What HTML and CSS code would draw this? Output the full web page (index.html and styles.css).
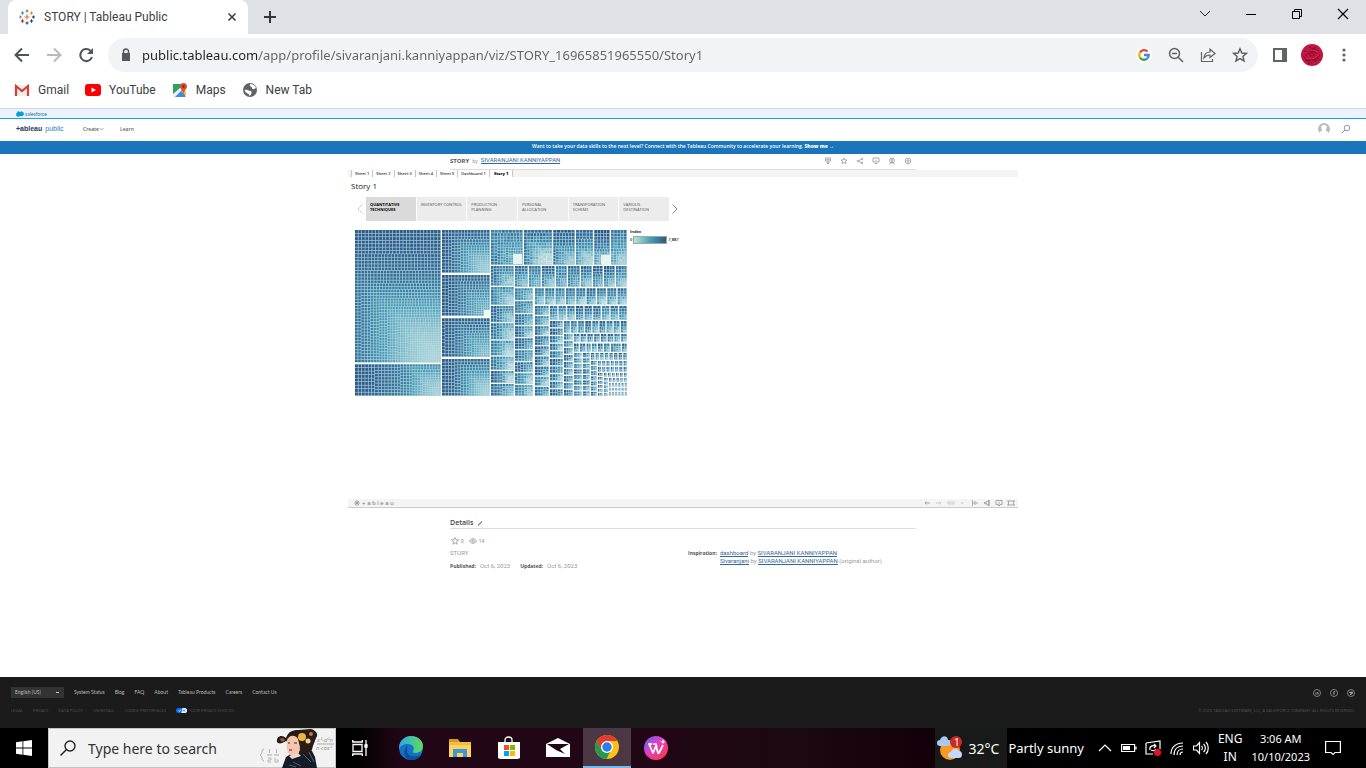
FILE: index.html
```html
<!DOCTYPE html>
<html lang="en">
<head>
<meta charset="utf-8">
<title>STORY | Tableau Public</title>
<link rel="stylesheet" href="styles.css">
</head>
<body>
<header class="browser">
  <div class="tabstrip">
    <div class="tab">
      <svg class="i16" viewBox="0 0 16 16" fill="none" stroke-width="1.2"><path stroke="#e8762d" d="M8 5.500v5M5.500 8h5"/><path stroke="#c72037" d="M3.500 10.300v3.400M1.800 12h3.400"/><path stroke="#5b879b" d="M3.500 2.300v3.400M1.800 4h3.400M8 .5v3M6.500 2h3"/><path stroke="#eb9129" d="M12.500 2.300v3.400M10.800 4h3.400"/><path stroke="#1f457e" d="M12.500 10.300v3.400M10.800 12h3.400M8 12.500v3M6.500 14h3M14.500 6.500v3M13 8h3"/><path stroke="#7199a6" d="M1.500 6.500v3M0 8h3"/></svg>
      <span class="tab-title">STORY | Tableau Public</span>
      <button class="bare" aria-label="Close tab"><svg class="i16" viewBox="0 0 16 16" fill="none" stroke="#3c4043" stroke-width="1.600"><path d="M4.500 4.500l7 7M11.500 4.500l-7 7"/></svg></button>
    </div>
    <button class="bare newtab" aria-label="New tab"><svg class="i16" viewBox="0 0 16 16" fill="none" stroke="#333639" stroke-width="2"><path d="M8 2v12M2 8h12"/></svg></button>
    <div class="winbtns">
      <button class="bare" aria-label="Search tabs"><svg class="i16" viewBox="0 0 16 16" fill="none" stroke="#222"><path d="M3 5l5 5 5-5"/></svg></button>
      <button class="bare" aria-label="Minimize"><svg class="i16" viewBox="0 0 16 16" fill="none" stroke="#000"><path d="M3 8.500h10"/></svg></button>
      <button class="bare" aria-label="Restore"><svg class="i16" viewBox="0 0 16 16" fill="none" stroke="#000"><path d="M3.500 5.500h7v7h-7zM5.500 5.500v-2h7v7h-2"/></svg></button>
      <button class="bare" aria-label="Close"><svg class="i16" viewBox="0 0 16 16" fill="none" stroke="#000" stroke-width="1.200"><path d="M3 3l10 10M13 3L3 13"/></svg></button>
    </div>
  </div>
  <div class="toolbar">
    <button class="bare" aria-label="Back"><svg class="i16" viewBox="0 0 16 16" fill="none" stroke="#505357" stroke-width="2"><path d="M15 8H2M8 1.500L1.500 8 8 14.500"/></svg></button>
    <button class="bare" aria-label="Forward"><svg class="i16" viewBox="0 0 16 16" fill="none" stroke="#b8babd" stroke-width="2"><path d="M1 8h13M8 1.500L14.500 8 8 14.500"/></svg></button>
    <button class="bare" aria-label="Reload"><svg class="i16" viewBox="0 0 16 16" fill="none" stroke="#505357" stroke-width="2"><path d="M14 10a6 6 0 1 1-1.500-6.200"/><path d="M15 1v6H9z" fill="#505357" stroke="none"/></svg></button>
    <div class="omnibox">
      <svg class="i16" viewBox="0 0 16 16"><path d="M4 6h8v8H4z" fill="#55595e"/><path d="M5.500 6V4.500a2.500 2.500 0 0 1 5 0V6" fill="none" stroke="#55595e" stroke-width="1.500"/></svg>
      <input class="url" type="text" aria-label="Address" value="public.tableau.com/app/profile/sivaranjani.kanniyappan/viz/STORY_16965851965550/Story1">
      <button class="bare" aria-label="Search with Google"><svg class="i16" viewBox="0 0 16 16"><circle cx="8" cy="8" r="8" fill="#fff"/><g fill="none" stroke-width="2.400"><path stroke="#ea4335" d="M4 5.500a4.700 4.700 0 0 1 7.500-.9"/><path stroke="#fbbc05" d="M4 5.500a4.800 4.800 0 0 0 0 5"/><path stroke="#34a853" d="M4 10.500a4.700 4.700 0 0 0 7.300 1"/><path stroke="#4285f4" d="M8 8h4.700a5 5 0 0 1-1.500 3.500"/></g></svg></button>
      <button class="bare" aria-label="Zoom"><svg class="i16" viewBox="0 0 16 16" fill="none" stroke="#5f6368" stroke-width="1.500"><circle cx="6.500" cy="6.500" r="5"/><path d="M4 6.500h5M10 10l5 5"/></svg></button>
      <button class="bare" aria-label="Share"><svg class="i16" viewBox="0 0 16 16" fill="none" stroke="#5f6368" stroke-width="1.200"><path d="M1.500 5v9.500h11V12M4 11c.3-4 2.500-6 6-6V2l5 4.500-5 4V8c-3 0-4.500 1-6 3z"/></svg></button>
      <button class="bare" aria-label="Bookmark"><svg class="i16" viewBox="0 0 16 16" fill="none" stroke="#5f6368" stroke-width="1.500"><path d="M8 1.800l1.800 4.200 4.600.4-3.500 3 1.100 4.500L8 11.500 4 13.900l1.100-4.500-3.500-3 4.600-.4z"/></svg></button>
    </div>
    <div class="chrome-actions">
    <button class="bare" aria-label="Side panel"><svg class="i16" viewBox="0 0 16 16"><path d="M2 2h12v12H2z" fill="#fff" stroke="#5f6368" stroke-width="2"/><path d="M10 1h5v14h-5z" fill="#5f6368"/></svg></button>
    <button class="bare" aria-label="Profile"><svg class="i22" viewBox="0 0 22 22"><circle cx="11" cy="11" r="11" fill="#c0163f"/><g fill="none" stroke="#7b0c2e" stroke-width=".9"><path d="M3 7c5 3 9-4 15 0M5 12c0-4 7-7 11-2M8 10c2-3 6-1 5 1s-5 1-5-1M2 12c5 6 12 5 17-1M4 16c5 2 11 2 14-2M7 19c4 0 7-1 9-3M8 3c3 2 5 2 7 0"/></g><g fill="none" stroke="#e33c68" stroke-width=".6"><path d="M4 9c4-1 7-5 13-1M5 14c5 2 10 0 12-3M9 18h5"/></g></svg></button>
    <button class="bare" aria-label="Menu"><svg class="i16" viewBox="0 0 16 16" fill="#5f6368"><circle cx="8" cy="3" r="1.600"/><circle cx="8" cy="8" r="1.600"/><circle cx="8" cy="13" r="1.600"/></svg></button>
    </div>
  </div>
  <nav class="bookmarks">
    <a href="#"><svg class="i16" viewBox="0 0 16 16"><path fill="#eee" d="M1 3h14v11H1z"/><path fill="none" stroke="#d93e34" stroke-width="2.200" d="M2 14V4l6 5 6-5v10"/></svg>Gmail</a>
    <a href="#"><svg class="i16" viewBox="0 0 16 16"><rect y="2" width="16" height="12" rx="3" fill="#f00"/><path d="M6.500 5.500v5L11 8z" fill="#fff"/></svg>YouTube</a>
    <a href="#"><svg class="i16" viewBox="0 0 16 16"><path fill="#34a05f" d="M1 2h12v13H1z"/><path fill="#4285f4" d="M2 15l6-6 6 6z"/><path fill="#eee" d="M1 12l8-7 2 2-8 8H1z"/><path fill="#fbc02d" d="M9 9l5 5V9z"/><path fill="#dd4b3e" d="M11.500 12C11 8 8 7 8 4.500a3.500 3.500 0 0 1 7 0C15 7 12 8 11.500 12z"/><circle cx="11.500" cy="4.500" r="1.200" fill="#7b241d"/></svg>Maps</a>
    <a href="#"><svg class="i16" viewBox="0 0 16 16"><circle cx="8" cy="8" r="7" fill="#5f6368"/><path d="M2.500 8c4-1 4 1 6 1s1 4-1 5c0-3-4-2-5-6zM8 2c-1 3 2 2 2 4s3 1 4 0c-1-3-3-4-6-4z" fill="#fff"/></svg>New Tab</a>
  </nav>
</header>

<div class="salesforce"><svg viewBox="0 0 8 6"><path fill="#0d9dda" d="M1 5.500C-.5 4.500 0 2 1 2 1 0 3 0 4 1c1-1 2-1 2.500 0C8 1 8.500 4 7 4.500c-1 1-2 1-3 .5-1 1-2 1-3 .5z"/></svg><span>salesforce</span></div>
<nav class="sitenav">
  <a class="logo" href="#"><b>+ableau</b><i></i><span>public</span></a>
  <button class="bare navitem">Create <svg viewBox="0 0 5 4" fill="none" stroke="#888" stroke-width=".8"><path d="M.5 1l2 2 2-2"/></svg></button>
  <a class="navitem" href="#">Learn</a>
  <span class="grow"></span>
  <button class="bare" aria-label="Account"><svg class="i12" viewBox="0 0 12 12"><circle cx="6" cy="6" r="6" fill="#bbb"/><path fill="#fff" d="M6 2c4 0 3 4 1.500 5 0 1 3 1 3 3L8 12H4l-2.500-2c0-2 3-2 3-3C3 6 2 2 6 2z"/></svg></button>
  <button class="bare" aria-label="Search"><svg class="i12" viewBox="0 0 12 12" fill="none" stroke="#8097c7"><circle cx="7" cy="5" r="2.800"/><path d="M5 7l-3 3"/></svg></button>
</nav>
<div class="banner">Want to take your data skills to the next level? Connect with the Tableau Community to accelerate your learning. <a href="#">Show me →</a></div>

<main>
  <div class="narrow vizhead">
    <h1>STORY</h1><span class="by">by</span><a class="link" href="#">SIVARANJANI KANNIYAPPAN</a>
    <div class="actions">
      <button class="bare" aria-label="Nominate"><svg class="i8" viewBox="0 0 8 8"><path d="M1.500 1h5v3h-5zM4 4v3M2.500 5L4 7l1.500-2M2.500 2.500h3"/></svg></button>
      <button class="bare" aria-label="Favorite"><svg class="i8" viewBox="0 0 8 8"><path d="M4 1l1 2h2L5.500 4.500l.5 2L4 5.500l-2 1 .5-2L1 3h2z"/></svg></button>
      <button class="bare" aria-label="Share"><svg class="i8" viewBox="0 0 8 8"><circle cx="2" cy="4" r=".8"/><circle cx="6" cy="2" r=".8"/><circle cx="6" cy="6" r=".8"/><path d="M3 3.500L5 2.500M3 4.500l2 1"/></svg></button>
      <button class="bare" aria-label="Download"><svg class="i8" viewBox="0 0 8 8"><path d="M3 5H1V1h6v4H5M4 2.500V7M3 6l1 1 1-1"/></svg></button>
      <button class="bare" aria-label="Make a copy"><svg class="i8" viewBox="0 0 8 8"><circle cx="4" cy="3.500" r="2.500"/><circle cx="4" cy="3" r="1"/><path d="M1.500 7.500L3 5h2l1.500 2.500"/></svg></button>
      <button class="bare" aria-label="Settings"><svg class="i8" viewBox="0 0 8 8"><circle cx="4" cy="4" r="2.800"/><circle cx="4" cy="4" r="1.200"/></svg></button>
    </div>
  </div>
  <section class="viz">
    <div class="sheets">
      <button>Sheet 1</button><button>Sheet 2</button><button>Sheet 3</button><button>Sheet 4</button><button>Sheet 5</button><button>Dashboard 1</button><button class="on">Story 1</button>
    </div>
    <div class="story">
      <h2>Story 1</h2>
      <div class="points">
        <button class="bare arrow" aria-label="Previous"><svg viewBox="0 0 6 10"><path d="M5.500.5L1 5l4.500 4.500"/></svg></button>
        <div class="pointlist">
          <button class="on">QUANTITATIVE TECHNIQUES</button><button class="wide">INVENTORY CONTROL</button><button>PRODUCTION PLANNING</button><button>PERSONAL ALLOCATION</button><button>TRANSPORATION SCHEME</button><button>VARIOUS DESTINATION</button>
        </div>
        <button class="bare arrow next" aria-label="Next"><svg viewBox="0 0 6 10"><path d="M.5.500L5 5 .5 9.500"/></svg></button>
      </div>
      <div class="chartrow">
        <canvas id="treemap" width="273" height="167"></canvas>
        <div class="legend"><b>Index</b><div><span>0</span><i></i><span>7,887</span></div></div>
      </div>
    </div>
    <div class="vizbar">
      <svg class="i8" viewBox="0 0 8 8"><path d="M4 1v6M1 4h6M2 2l4 4M6 2L2 6"/></svg>
      <span class="brand">+ a b l e a u</span>
      <button class="bare" aria-label="Undo"><svg class="i8" viewBox="0 0 8 8"><path d="M7 4H2M3.500 2.500L2 4l1.500 1.500"/></svg></button>
      <button class="bare" aria-label="Redo"><svg class="i8 faint" viewBox="0 0 8 8"><path d="M1 4h5M4.500 2.500L6 4 4.500 5.500"/></svg></button>
      <button class="bare" aria-label="Replay"><svg class="i8 faint" viewBox="0 0 8 8"><path d="M1 3h6v2H1zM2 2L1 3"/></svg></button>
      <button class="bare" aria-label="Replay options"><svg class="i8" viewBox="0 0 8 8"><path d="M2.500 4h1.500"/></svg></button>
      <button class="bare" aria-label="Reset"><svg class="i8" viewBox="0 0 8 8"><path d="M1.500 1v6M7 4H3M4.500 2L2.500 4l2 2"/></svg></button>
      <button class="bare" aria-label="Share view"><svg class="i8" viewBox="0 0 8 8"><path d="M1 4l5-2.500v5zM6 1v6M3 3v2"/></svg></button>
      <button class="bare" aria-label="Download view"><svg class="i8" viewBox="0 0 8 8"><path d="M3 5.500H1v-4h6v4H5M4 3v4M3 6l1 1 1-1"/></svg></button>
      <button class="bare" aria-label="Full screen"><svg class="i8" viewBox="0 0 8 8"><path d="M0 2h8M0 6h8M1.500 2v4M6.500 2v4"/></svg></button>
    </div>
  </section>
  <section class="narrow details">
    <h3>Details <svg class="i8" viewBox="0 0 8 8"><path d="M2 6.500L6 2.500" stroke-width="1.300"/></svg></h3>
    <div class="cols">
      <div class="left">
        <p class="stats"><svg class="i8" viewBox="0 0 8 8"><path d="M4 .5l1 2.300h2.500L5.500 4.500l.7 2.700L4 5.700 1.800 7.200l.7-2.700L.5 2.800H3z"/></svg><span>0</span><svg class="i8" viewBox="0 0 8 8"><path d="M.3 4C2.500 1 5.500 1 7.700 4 5.500 7 2.500 7 .3 4z"/><circle cx="4" cy="4" r="1.200"/></svg><span>14</span></p>
        <p class="desc">STORY</p>
        <p class="dates"><b>Published:</b><span>Oct 6, 2023</span><b>Updated:</b><span>Oct 6, 2023</span></p>
      </div>
      <div class="insp"><b>Inspiration:</b>
        <div><a class="link" href="#">dashboard</a> by <a class="link" href="#">SIVARANJANI KANNIYAPPAN</a><br><a class="link" href="#">Sivaranjani</a> by <a class="link" href="#">SIVARANJANI KANNIYAPPAN</a> (original author)</div>
      </div>
    </div>
  </section>
</main>

<footer class="foot">
  <div class="frow">
    <span class="lang"><select aria-label="Language"><option>English (US)</option></select></span>
    <a href="#">System Status</a><a href="#">Blog</a><a href="#">FAQ</a><a href="#">About</a><a href="#">Tableau Products</a><a href="#">Careers</a><a href="#">Contact Us</a>
    <span class="grow"></span>
    <div class="socials">
    <a href="#" aria-label="LinkedIn"><svg class="i8" viewBox="0 0 8 8"><circle cx="4" cy="4" r="3.500"/><path d="M2.800 3.500v2M4 5.500v-2h1.200v2"/></svg></a>
    <a href="#" aria-label="Facebook"><svg class="i8" viewBox="0 0 8 8"><circle cx="4" cy="4" r="3.500"/><path d="M4 6V2.500h1M3 4h2"/></svg></a>
    <a href="#" aria-label="Twitter"><svg class="i8" viewBox="0 0 8 8"><circle cx="4" cy="4" r="3.500"/><path d="M2.500 3c1 1 1.500 0 2.500 0s0 2-2 2.300" stroke-width="1.200"/></svg></a>
    </div>
  </div>
  <div class="frow legal">
    <a href="#">LEGAL</a><a href="#">PRIVACY</a><a href="#">DATA POLICY</a><a href="#">UNINSTALL</a><a href="#">COOKIE PREFERENCES</a><a href="#" class="choices"><svg viewBox="0 0 11 5"><rect width="11" height="5" rx="2.500" fill="#0a6cff"/><path d="M6.500 0h2a2.500 2.500 0 0 1 0 5H5.500z" fill="#fff"/><path d="M2.500 2.500l1 1 1.500-2" fill="none" stroke="#fff" stroke-width=".8"/><path d="M7 1.500l2 2M9 1.500l-2 2" stroke="#0a6cff"/></svg>YOUR PRIVACY CHOICES</a>
    <span class="grow"></span><small>© 2023 TABLEAU SOFTWARE, LLC, A SALESFORCE COMPANY. ALL RIGHTS RESERVED.</small>
  </div>
</footer>

<div class="taskbar">
  <button class="bare app" aria-label="Start"><svg class="i16" viewBox="0 0 16 16" fill="#fff"><path d="M0 2.200L6.500 1.300v6.200H0zM7.300 1.200L16 0v7.500H7.300zM0 8.400h6.500v6.300L0 13.800zM7.300 8.400H16V16l-8.700-1.200z"/></svg></button>
  <div class="search">
    <svg class="i16" viewBox="0 0 16 16" fill="none" stroke="#222" stroke-width="1.400"><circle cx="10" cy="6" r="5"/><path d="M6.500 9.500L.5 15.500"/></svg>
    <input type="text" aria-label="Search" placeholder="Type here to search">
    <svg class="doodle" viewBox="0 0 75 39"><g fill="none" stroke="#aaa"><path d="M4 20c-3 0-1 5-4 6 3 1 1 6 4 6M7 26h5M14 26h5M57 15h17"/><path d="M9.500 20v4M16.500 20v4M8 29h3v2H8v2h3M15 29v4h3v-2h-2" stroke-width=".8"/></g><text x="57" y="13" font-size="6" font-style="italic" fill="#999">x²-d²n</text><text x="56" y="21" font-size="6" font-style="italic" fill="#999">n·cos²</text><path fill="#161c27" d="M22 39l4-11 8-5 10-3 8 2 3 6 2 11z"/><path fill="#2a1b16" d="M17 13c-1-6 5-8 9-4 2-6 6-8 12-8l13-1c5 1 8 6 5 9l-3 8-3 10-7-4-9-7-8-4c-4 3-8 3-9 1z"/><path fill="#8a5a45" d="M20 10c2-2 4-1 5 1-1 2-4 3-5-1z"/><path fill="#f3c6b0" d="M27 11c2-5 8-6 11-1l2 8-1 6-4 3c-5 1-10-4-8-16z"/><path fill="#f4d5c3" d="M29 27l9-3 3 3-9 3z"/><path fill="none" stroke="#a83232" stroke-width="1.300" d="M29 21h3"/><path fill="none" stroke="#3a2925" d="M28 14h2M34 14h3"/><circle cx="42" cy="8" r="4" fill="#efb63c"/><circle cx="48" cy="12" r="2.500" fill="#f6d490"/><circle cx="51" cy="5" r="2" fill="#b97c3d"/><path d="M43 25l8 8M49 23l5 10M33 33l8 4M29 36l7 2" stroke="#516376" fill="none"/></svg>
  </div>
  <button class="bare app" aria-label="Task view"><svg class="i16" viewBox="0 0 16 16" fill="none" stroke="#fff" stroke-width="1.300"><path d="M1 4.500h9v7H1zM.7 0v2h9.600V0M.7 16v-2h9.600v2M14 0v16"/><path fill="#fff" d="M13 5h2v2h-2z"/></svg></button>
  <div class="pinned">
  <button class="bare app" aria-label="Edge"><svg class="i24" viewBox="0 0 24 24"><defs><linearGradient id="eg"><stop offset="0" stop-color="#2aa8e8"/><stop offset="1" stop-color="#5edb5b"/></linearGradient></defs><circle cx="12" cy="12" r="12" fill="#1472c4"/><path fill="url(#eg)" d="M0 11C1 4 6 0 12 0c8 0 12 6 12 10 0 5-4 7-8 7-2 0-3-1-2-2 2-3 0-7-5-7-4 0-8 2-9 5z"/><path fill="#0d4f9c" d="M8 14c0 6 6 8 14 5-3 5-8 6-12 5-5-2-7-10-1-15-1 2-1 3-1 5z"/></svg></button>
  <button class="bare app" aria-label="File Explorer"><svg class="i24" viewBox="0 0 24 24"><path fill="#d99a1c" d="M1 3h9l2 3H1z"/><path fill="#ffd45e" d="M1 6h22v15H1z"/><path fill="#f5bc42" d="M1 6h22v3H1z"/><path fill="#3a96dd" d="M5 13h14v8h-4v-4H9v4H5z"/></svg></button>
  <button class="bare app" aria-label="Store"><svg class="i24" viewBox="0 0 24 24"><path fill="none" stroke="#fff" stroke-width="1.300" d="M8 7V4c0-4 7-4 7 0v3"/><path fill="#fff" d="M1 6h22v16l-2 1H3l-2-1z"/><path fill="#f25022" d="M7 9h5v5H7z"/><path fill="#7fba00" d="M13 9h5v5h-5z"/><path fill="#00a4ef" d="M7 15h5v5H7z"/><path fill="#ffb900" d="M13 15h5v5h-5z"/></svg></button>
  <button class="bare app" aria-label="Mail"><svg class="i24" viewBox="0 0 24 24"><path fill="#fff" d="M0 8l12-6 12 6v13H0z"/><path fill="#200613" d="M1 8h22l-9 5 5 5-9-4z"/></svg></button>
  <button class="bare app active" aria-label="Chrome"><svg class="i24" viewBox="0 0 24 24"><circle cx="12" cy="12" r="12" fill="#fbc116"/><path fill="#e33b2e" d="M1.600 6A12 12 0 0 1 22.400 6H12l-5 9z"/><path fill="#269b4d" d="M1.600 6L7 15l9 0-4.500 9A12 12 0 0 1 1.600 6z"/><circle cx="12" cy="12" r="6" fill="#fff"/><circle cx="12" cy="12" r="4.700" fill="#2b7de9"/></svg></button>
  <button class="bare app" aria-label="WPS Office"><svg class="i24" viewBox="0 0 24 24"><defs><linearGradient id="wg" x2="1" y2="1"><stop offset="0" stop-color="#5468ff"/><stop offset=".45" stop-color="#e93bc0"/><stop offset="1" stop-color="#ff3b30"/></linearGradient></defs><circle cx="12" cy="12" r="12" fill="url(#wg)"/><path fill="none" stroke="#fff" stroke-width="1.800" stroke-linejoin="round" d="M8 8H5l4 9 3-7 2 7h1l4-8"/><path fill="none" stroke="#fff" stroke-width="1.500" d="M9 8h3l1 3"/><path fill="#fff" d="M19 3l.7 2 2 .7-2 .7-.7 2-.7-2-2-.7 2-.7z"/></svg></button>
  </div>
  <span class="grow"></span>
  <button class="bare weather"><svg class="i26" viewBox="0 0 26 26"><circle cx="13" cy="15" r="10" fill="#f79a22"/><path fill="#a9c9f5" d="M3 11a3 3 0 0 1 0-6c2-6 8-4 8 0 4 1 3 6 0 6z"/><path fill="#c5dafa" d="M14 23a3 3 0 0 1 0-6c2-5 7-4 8-1 4 0 4 7 0 7z"/><circle cx="19" cy="7" r="6" fill="#c92a21"/><text x="17" y="11" font-size="10" fill="#fff">1</text></svg><span>32°C</span></button>
  <span class="sunny">Partly sunny</span>
  <div class="tray">
    <button class="bare" aria-label="Hidden icons"><svg class="i16" viewBox="0 0 16 16"><path d="M2 11l6-6 6 6"/></svg></button>
    <button class="bare" aria-label="Battery"><svg class="i16" viewBox="0 0 16 16"><path d="M.6 4.500h13v7H.6zM15 6.500v3"/><path fill="#fff" stroke="none" d="M2 6h7v4H2z"/></svg></button>
    <button class="bare" aria-label="Sync"><svg class="i16" viewBox="0 0 16 16"><path d="M1 3l14-2v8M1 3v11h7M5 10c-1-4 3-5 6-4M9 4l2 2-2 2M11 9c-1 2-3 2-5 1"/><circle cx="12.500" cy="12.500" r="3.500" fill="#e81123" stroke="none"/></svg></button>
    <button class="bare" aria-label="Wi-Fi"><svg class="i16" viewBox="0 0 16 16"><path d="M2 14C2 7 7 3 14 3M5 15c0-6 4-9 9-9M8 15c0-4 3-6 6-6M11 15c0-2 1-3 3-3"/></svg></button>
    <button class="bare" aria-label="Volume"><svg class="i16" viewBox="0 0 16 16"><path d="M.5 6h3l3-3.500v11L3.500 10h-3zM8.500 6c1 1 1 3 0 4M10.500 4c2.500 2 2.500 6 0 8M13 2c3 3 3 9 0 12"/></svg></button>
    <span class="stack lang2">ENG<br>IN</span>
    <span class="stack clock">3:06 AM<br>10/10/2023</span>
    <button class="bare note" aria-label="Notifications"><svg class="i16" viewBox="0 0 16 16"><path d="M.6 1.500h14.800v11H10L8 14.500l-2-2H.6z"/></svg></button>
  </div>
</div>
<script src="treemap.js"></script>
</body>
</html>
```

FILE: styles.css
```css
* { box-sizing: border-box; }
body { margin: 0; min-height: 100vh; display: flex; flex-direction: column; background: #fff; font-family: "Open Sans", "Noto Sans", sans-serif; color: #333; }
h1, h2, h3, p { margin: 0; }
a { color: inherit; text-decoration: none; }
button, input, select { font: inherit; color: inherit; }
svg { display: block; flex: none; }
.bare { border: 0; background: none; padding: 0; display: flex; align-items: center; justify-content: center; }
.grow { flex: 1; }
.i8 { width: 8px; height: 8px; }
.i12 { width: 12px; height: 12px; }
.i16 { width: 16px; height: 16px; }
.i22 { width: 22px; height: 22px; }
.i24 { width: 24px; height: 24px; }
.i26 { width: 26px; height: 26px; }

.browser { border-bottom: 1px solid #d5d7da; font-family: Roboto, sans-serif; }
.tabstrip { height: 34px; background: #dee1e6; display: flex; align-items: center; padding-left: 8px; }
.tab { width: 240px; height: 34px; background: #fff; border-radius: 8px 8px 0 0; display: flex; align-items: center; gap: 9px; padding: 0 8px 0 11px; font-size: 12px; color: #3c4043; }
.tab-title { flex: 1; white-space: nowrap; }
.newtab { margin-left: 14px; }
.winbtns { margin-left: auto; display: flex; gap: 30px; padding: 0 15px 6px 0; }
.toolbar { height: 42px; display: flex; align-items: center; gap: 14px; padding: 0 14px; }
.toolbar > .bare { margin-right: 2px; }
.omnibox { flex: 1; height: 34px; border-radius: 17px; background: #f1f3f4; display: flex; align-items: center; gap: 16px; padding: 0 10px; margin-left: -2px; }
.chrome-actions { display: flex; align-items: center; gap: 13px; }
.url { flex: 1; border: 0; padding: 0; margin-left: -8px; font-family: "Noto Sans", sans-serif; font-size: 13px; color: transparent; background: linear-gradient(to right, #202124 117px, #5f6368 117px); -webkit-background-clip: text; background-clip: text; }
.bookmarks { height: 32px; display: flex; align-items: center; gap: 16px; padding: 0 14px 4px; font-size: 12px; color: #3c4043; }
.bookmarks a { display: flex; align-items: center; gap: 8px; }

.salesforce { height: 10px; background: #eaf3fe; border-bottom: 1px solid #1ba0d8; display: flex; align-items: center; gap: 1px; padding-left: 16px; font: 5px/8px Lato, sans-serif; color: #28749b; }
.salesforce svg { width: 8px; height: 6px; }
.sitenav { height: 22px; display: flex; align-items: center; padding: 0 14px 2px 16px; gap: 16px; font-size: 5px; font-weight: 600; color: #666; }
.sitenav .bare + .bare { margin-left: -6px; }
.logo { display: flex; width: 51px; font: 7px/10px "Liberation Sans", sans-serif; color: #1f3864; }
.logo span { color: #2b7fc5; }
.logo i { width: 3px; }
.navitem svg { width: 5px; height: 4px; }
.banner { min-height: 13px; background: #1b75bb; color: #fff; text-align: center; font-size: 5px; line-height: 11px; font-weight: 600; }
.banner a { font-weight: 800; }

main { flex: 1; }
.narrow { width: 466px; max-width: 100%; margin: 0 auto; }
.vizhead { height: 16px; display: flex; align-items: center; gap: 3px; border-bottom: 1px solid #ddd; padding-bottom: 2px; font-size: 5px; color: #888; }
h1 { font-size: 6px; font-weight: 700; color: #555; }
.link { color: #3a6593; border-bottom: 1px solid #2a6bac; font-family: Roboto, sans-serif; font-size: 6px; line-height: 6px; }
.actions { margin-left: auto; display: flex; gap: 8px; padding-right: 4px; }
.actions svg, .vizbar svg, .details svg { fill: none; stroke: #888; stroke-width: .7; }
.viz { max-width: 670px; margin: 0 auto; }
.sheets { height: 7px; background: #f4f4f4; padding-left: 3px; display: flex; }
.sheets button { border: 0; border-left: 1px solid #c5c5c5; background: #fff; padding: 0 3px; font-size: 4px; line-height: 7px; font-weight: 600; white-space: nowrap; }
.sheets .on { border-right: 1px solid #c5c5c5; color: #000; font-weight: 800; padding: 0 4px; }
.story { padding: 3px 3px 0; min-height: 322px; }
h2 { font-size: 8px; line-height: 12px; font-weight: 400; color: #222; }
.points { display: flex; align-items: center; margin-top: 5px; padding-left: 6px; gap: 3px; }
.arrow { width: 6px; }
.arrow svg { width: 6px; height: 10px; fill: none; stroke: #ccc; }
.next svg { stroke: #888; }
.pointlist { display: flex; gap: 1px; width: 303px; }
.pointlist button { flex: 1 1 0; height: 24px; border: 0; background: #ececec; padding: 5px 4px; text-align: left; font-size: 4px; line-height: 5px; color: #555; display: flex; align-items: flex-start; }
.pointlist .on { background: #dadada; color: #000; font-weight: 700; }
.pointlist .wide { white-space: nowrap; }
.chartrow { display: flex; gap: 3px; padding: 8px 0 0 3px; }
#treemap { display: block; }
.legend { font-size: 4px; line-height: 6px; color: #222; }
.legend b { display: block; }
.legend div { display: flex; align-items: center; gap: 1px; font-weight: 600; padding-top: 1px; }
.legend i { width: 34px; height: 8px; border: 1px solid #a5a5a0; background: linear-gradient(to right, #bce4d8, #45a2b9, #2c5985); }
.vizbar { height: 9px; background: #f4f4f4; border-bottom: 1px solid #ccc; display: flex; align-items: center; gap: 4px; padding: 0 3px 0 5px; }
.vizbar .bare { width: 8px; }
.vizbar .faint { stroke: #bbb; }
.brand { flex: 1; font: 6px/7px "Liberation Sans", sans-serif; color: #777; margin-left: -3px; }
.details { padding-top: 10px; font: 6px/8px Roboto, sans-serif; color: #999; }
h3 { display: flex; align-items: center; gap: 3px; font: 600 7px/10px "Open Sans", sans-serif; color: #444; border-bottom: 1px solid #ddd; }
.cols { display: flex; }
.left { flex: 1; padding-top: 8px; }
.insp { width: 228px; padding-top: 20px; display: flex; gap: 3px; white-space: nowrap; }
.details b { color: #555; font: 700 5px/8px "Open Sans", sans-serif; }
.stats { display: flex; align-items: center; gap: 2px; padding-left: 1px; }
.stats span { margin-right: 3px; color: #b08080; font-size: 5px; }
.desc { padding-top: 4px; }
.dates { display: flex; gap: 4px; padding-top: 5px; }
.dates span { margin-right: 6px; }

.foot { background: #1b1b1b; height: 51px; padding: 10px 11px 0; color: #bbb; font: 5px/11px Lato, sans-serif; }
.frow { display: flex; align-items: center; gap: 10px; }
.lang { width: 53px; height: 11px; background: #333; position: relative; display: flex; }
.lang::after { content: ""; position: absolute; right: 5px; top: 5px; width: 3px; height: 1px; background: #ccc; }
.lang select { width: 100%; appearance: none; border: 0; background: none; padding: 0 4px; }
.socials { display: flex; gap: 9px; }
.socials svg { fill: none; stroke: #aaa; stroke-width: .7; }
.legal { margin-top: 7px; gap: 10px; font-size: 4px; font-family: "Open Sans", sans-serif; color: #555; }
.legal small { font-size: 4px; }
.choices { display: flex; align-items: center; gap: 2px; }
.choices svg { width: 11px; height: 5px; }

.taskbar { height: 40px; background: linear-gradient(to right, #000 358px, #210615 400px, #210615 650px, #1b0810 800px, #14000a 920px, #000 1010px); color: #fff; display: flex; align-items: stretch; font-family: "Noto Sans", sans-serif; }
.app { width: 48px; }
.pinned { display: flex; gap: 1px; margin-left: 3px; }
.active { background: #4c3844; border-bottom: 2px solid #76b9ed; }
.search { width: 288px; background: #f2f2f2; border: 1px solid #c5c5c5; display: flex; align-items: center; gap: 12px; padding-left: 11px; }
.search input { flex: 1; min-width: 0; border: 0; padding: 0; background: none; font-size: 14px; color: #333; }
.search input::placeholder { color: #333; opacity: 1; }
.doodle { width: 75px; height: 39px; }
.weather { background: #171a19; padding: 0 8px 0 2px; gap: 6px; font-size: 14px; }
.sunny { font-size: 13px; line-height: 41px; padding: 0 13px 0 1px; white-space: nowrap; }
.tray { display: flex; align-items: center; gap: 8px; padding-right: 25px; }
.tray svg { fill: none; stroke: #fff; stroke-width: 1.2; }
.stack { font-size: 12px; line-height: 18px; text-align: center; }
.lang2 { margin: 0 1px; }
.clock { font-size: 11px; }
.note { margin-left: 7px; }
```

FILE: treemap.js
```js
// Draws a two-level treemap: group rectangles, each tiled with value-sorted cells.
(function () {
  var ctx = document.getElementById('treemap').getContext('2d');
  var seed = 7;
  function rnd() { seed = (seed * 16807) % 2147483647; return seed / 2147483647; }

  var ramp = [[44, 90, 136], [50, 118, 157], [66, 158, 184], [140, 203, 210], [210, 236, 232]];
  function colour(t) {
    t = Math.max(0, Math.min(0.999, t)) * (ramp.length - 1);
    var i = Math.floor(t), f = t - i;
    return 'rgb(' + ramp[i].map(function (c, k) { return Math.round(c + (ramp[i + 1][k] - c) * f); }).join(',') + ')';
  }

  function worst(sum, max, min, side) {
    var s2 = sum * sum, w2 = side * side;
    return Math.max(w2 * max / s2, s2 / (w2 * min));
  }

  function group(x, y, w, h, cell, start, end, gap, noise) {
    ctx.fillStyle = 'rgb(190,212,225)';
    ctx.fillRect(x, y, w, h);
    var n = Math.max(4, Math.round(w * h / cell)), vals = [], total = 0, i;
    for (i = 0; i < n; i++) { vals[i] = 1.6 - i / n; total += vals[i]; }
    for (i = 0; i < n; i++) vals[i] *= w * h / total;
    i = 0;
    while (i < n && w > 0.2 && h > 0.2) {
      var side = Math.min(w, h), sum = vals[i], j = i + 1;
      while (j < n && worst(sum + vals[j], vals[i], vals[j], side) <= worst(sum, vals[i], vals[j - 1], side)) { sum += vals[j]; j++; }
      var thick = sum / side, pos = 0;
      for (var k = i; k < j; k++) {
        var len = vals[k] / thick;
        ctx.fillStyle = colour(start + (end - start) * Math.pow(k / n, 1.1) + (rnd() - 0.5) * noise);
        if (w >= h) ctx.fillRect(x, y + pos, thick - gap, len - gap);
        else ctx.fillRect(x + pos, y, len - gap, thick - gap);
        pos += len;
      }
      if (w >= h) { x += thick; w -= thick; } else { y += thick; h -= thick; }
      i = j;
    }
  }

  // Breakpoints are thirds of a chart unit.
  function add(x0, y0, x1, y1, cell, start, end, noise) {
    group(x0 / 3, y0 / 3, (x1 - x0) / 3, (y1 - y0) / 3, cell, start, end, 0.6, noise || 0.04);
  }
  function row(y0, y1, xs, cell) {
    for (var i = 0; i < xs.length - 1; i++) add(xs[i], y0, xs[i + 1] - 3, y1, cell, rnd() * 0.3, 0.6 + rnd() * 0.5, 0.2);
  }
  function col(x0, x1, ys, cell) {
    for (var i = 0; i < ys.length - 1; i++) add(x0, ys[i], x1, ys[i + 1] - 3, cell, rnd() * 0.3, 0.6 + rnd() * 0.5, 0.2);
  }
  function steps(a, b, n) {
    var r = [];
    for (var i = 0; i <= n; i++) r.push(a + (b + 3 - a) * i / n);
    return r;
  }

  add(3, 3, 261, 401, 8.5, 0.02, 0.84);
  add(3, 406, 261, 501, 8.5, 0, 0.8);
  add(264, 3, 408, 132, 8, 0, 0.78);
  add(264, 138, 408, 261, 8, 0, 0.62);
  add(264, 268, 408, 384, 8, 0, 0.66);
  add(264, 390, 408, 501, 8, 0, 0.82);
  ctx.fillStyle = '#f1faf8';
  ctx.fillRect(130, 81, 6, 6);

  row(3, 108, [411, 510, 598, 666, 721, 771, 822], 8);
  ctx.fillStyle = '#e6f5f2';
  ctx.fillRect(159, 25, 9, 10);
  ctx.fillRect(247, 26, 9, 10);
  col(411, 480, [111, 174, 231, 283, 335, 383, 426, 465, 504], 7);
  row(111, 174, [483, 525, 564, 606, 642, 681, 717, 750, 786, 822], 7);
  col(483, 537, [178, 217, 256, 292, 328, 364, 400, 433, 468, 504], 7);
  row(178, 227, steps(543, 819, 9), 7);
  col(543, 585, steps(231, 501, 9), 7);
  row(231, 273, steps(588, 819, 9), 7);
  col(588, 627, steps(276, 501, 10), 7);
  row(276, 312, steps(630, 819, 9), 7);
  col(630, 657, steps(315, 501, 9), 6);
  row(315, 339, steps(660, 819, 8), 6);
  row(344, 369, [660, 678, 698, 714, 732, 750, 771, 804, 822], 6);
  col(660, 684, steps(372, 501, 8), 6);
  col(687, 708, steps(372, 501, 8), 6);
  row(372, 393, steps(711, 819, 8), 5);
  col(711, 729, steps(396, 501, 7), 5);
  row(396, 411, steps(732, 819, 7), 5);
  row(414, 429, steps(732, 819, 7), 5);
  col(732, 747, steps(432, 501, 6), 4);
  row(432, 444, steps(750, 819, 6), 4);
  col(750, 762, steps(447, 501, 5), 4);
  row(447, 459, steps(765, 819, 5), 4);
  row(462, 474, steps(765, 819, 6), 3);
  row(477, 487, steps(765, 819, 6), 3);
  row(490, 501, steps(765, 819, 6), 3);
})();
```
